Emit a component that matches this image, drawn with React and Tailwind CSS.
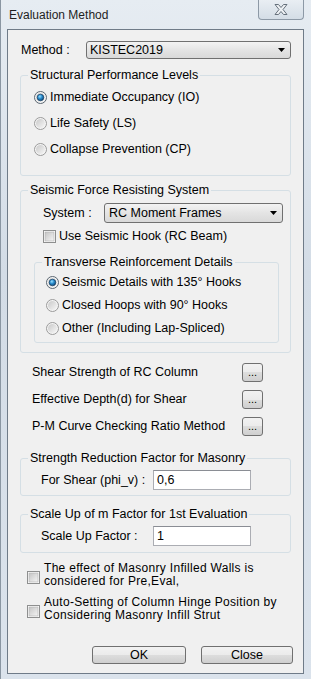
import { useState } from "react";

/* ================= UI HELPERS ================= */

const FONT = "font-['Liberation_Sans',Arial,sans-serif]";

function Radio({ checked }) {
  return (
    <svg width="13" height="13" viewBox="0 0 13 13" className="shrink-0">
      <defs>
        <linearGradient id="rOff" x1="0" y1="0" x2="1" y2="1">
          <stop offset="0%" stopColor="#c9c9c9" />
          <stop offset="100%" stopColor="#f7f7f7" />
        </linearGradient>
        <radialGradient id="rOn" cx="0.4" cy="0.35" r="0.7">
          <stop offset="0%" stopColor="#9be1ff" />
          <stop offset="45%" stopColor="#2b8fd0" />
          <stop offset="100%" stopColor="#0b3f6e" />
        </radialGradient>
      </defs>
      <circle cx="6.5" cy="6.5" r="6" fill="#f4f4f4" stroke={checked ? "#5b6670" : "#9a9a9a"} />
      <circle cx="6.5" cy="6.5" r="4.5" fill="url(#rOff)" />
      {checked && <circle cx="6.5" cy="6.5" r="3.3" fill="url(#rOn)" stroke="#173f63" strokeWidth="0.7" />}
    </svg>
  );
}

function Check() {
  return (
    <svg width="13" height="13" viewBox="0 0 13 13" className="shrink-0">
      <defs>
        <linearGradient id="cb" x1="0" y1="0" x2="1" y2="1">
          <stop offset="0%" stopColor="#c4c4c4" />
          <stop offset="100%" stopColor="#f5f5f5" />
        </linearGradient>
      </defs>
      <rect x="0.5" y="0.5" width="12" height="12" fill="#ffffff" stroke="#8e8f8f" />
      <rect x="2" y="2" width="9" height="9" fill="url(#cb)" stroke="#b0b0b0" strokeWidth="0.6" />
    </svg>
  );
}

function Arrow() {
  return (
    <svg width="7" height="4" viewBox="0 0 7 4" className="shrink-0">
      <polygon points="0,0 7,0 3.5,4" fill="#000" />
    </svg>
  );
}

function Group({ title, className, children }) {
  return (
    <div className={`relative shrink-0 rounded-[3px] border border-[#d5dfe5] ${className}`}>
      <span className="absolute top-[-8px] left-[7px] px-[2px] bg-[#f0f0f0] leading-[14px] whitespace-nowrap">
        {title}
      </span>
      {children}
    </div>
  );
}

function RadioRow({ checked, label }) {
  return (
    <div className="flex items-center h-[16px]">
      <Radio checked={checked} />
      <span className="ml-[3px] leading-[16px] whitespace-nowrap">{label}</span>
    </div>
  );
}

function DotsRow({ label }) {
  return (
    <div className="flex items-center h-[19px] pl-[12px]">
      <span className="w-[210px] whitespace-nowrap">{label}</span>
      <div className="flex items-end justify-center w-[21px] h-[19px] rounded-[3px] border border-[#707070] bg-[linear-gradient(#f2f2f2_0%,#ebebeb_50%,#dddddd_50%,#cfcfcf_100%)] pb-[3px] text-[11px] leading-none">
        ...
      </div>
    </div>
  );
}

function Field({ value }) {
  return (
    <div className="w-[98px] h-[20px] border border-[#abadb3] border-t-[#8a8d94] bg-white pl-[3px] leading-[18px]">
      {value}
    </div>
  );
}

function CheckNote({ className, lines }) {
  return (
    <div className={`flex items-center pl-[7px] shrink-0 ${className}`}>
      <div className="mt-[4px]">
        <Check />
      </div>
      <div className="ml-[4px] flex flex-col text-[12px] leading-[13px] tracking-[0.3px]">
        {lines.map((line) => (
          <span key={line} className="whitespace-nowrap">
            {line}
          </span>
        ))}
      </div>
    </div>
  );
}

/* ================= COMPONENT ================= */

export default function App() {
  const [method] = useState("KISTEC2019");

  return (
    <div className={`${FONT} w-[311px] h-[679px] overflow-hidden bg-[linear-gradient(#e6ecf2,#d3dce6_40%,#dbe3ec)] border-l border-[#8a96a2] text-[12px] text-black`}>
      {/* ===== TITLE BAR ===== */}
      <div className="relative h-[29px] flex items-center pl-[8px] pt-[1px]">
        <span className="leading-[14px] text-[#1e1e1e]">Evaluation Method</span>
        <div className="absolute top-0 left-[257px] w-[46px] h-[20px] flex items-center justify-center rounded-b-[4px] border border-t-0 border-[#8d99a6] bg-[linear-gradient(#e9eef3,#d4dde6)]">
          <svg width="14" height="11" viewBox="0 0 14 11">
            <polygon
              points="1,0.5 4.5,0.5 7,3.5 9.5,0.5 13,0.5 9,5.5 13,10.5 9.5,10.5 7,7.5 4.5,10.5 1,10.5 5,5.5"
              fill="#eef1f4"
              stroke="#66717c"
              strokeWidth="1"
              strokeLinejoin="round"
            />
          </svg>
        </div>
      </div>

      {/* ===== CLIENT ===== */}
      <div className="ml-[6px] w-[297px] h-[645px] border border-[#6f7b88] bg-[#f0f0f0] pl-[12px] flex flex-col text-[12.5px]">
        {/* METHOD */}
        <div className="mt-[11px] h-[18px] flex items-center shrink-0">
          <span className="w-[66px] pl-[1px] whitespace-nowrap">Method :</span>
          <div className="flex items-center justify-between w-[205px] h-[18px] rounded-[3px] border border-[#707070] bg-[linear-gradient(#f3f3f3,#e4e4e4_50%,#d9d9d9)] pl-[3px] pr-[5px]">
            <span>{method}</span>
            <Arrow />
          </div>
        </div>

        {/* PERFORMANCE LEVELS */}
        <Group title="Structural Performance Levels" className="mt-[16px] w-[271px] h-[101px]">
          <div className="flex flex-col gap-[10px] pt-[13px] pl-[13px]">
            <RadioRow checked label="Immediate Occupancy (IO)" />
            <RadioRow label="Life Safety (LS)" />
            <RadioRow label="Collapse Prevention (CP)" />
          </div>
        </Group>

        {/* SEISMIC SYSTEM */}
        <Group title="Seismic Force Resisting System" className="mt-[14px] w-[271px] h-[163px]">
          <div className="flex items-center mt-[12px] h-[20px] pl-[22px]">
            <span className="w-[61px] whitespace-nowrap">System :</span>
            <div className="flex items-center justify-between w-[179px] h-[20px] rounded-[3px] border border-[#707070] bg-[linear-gradient(#f3f3f3,#e4e4e4_50%,#d9d9d9)] pl-[4px] pr-[5px]">
              <span>RC Moment Frames</span>
              <Arrow />
            </div>
          </div>

          <div className="flex items-center mt-[6px] h-[14px] pl-[22px]">
            <Check />
            <span className="ml-[3px] whitespace-nowrap">Use Seismic Hook (RC Beam)</span>
          </div>

          <Group title="Transverse Reinforcement Details" className="mt-[19px] ml-[13px] w-[245px] h-[81px]">
            <div className="flex flex-col gap-[7px] pt-[11px] pl-[11px]">
              <RadioRow checked label="Seismic Details with 135° Hooks" />
              <RadioRow label="Closed Hoops with 90° Hooks" />
              <RadioRow label="Other (Including Lap-Spliced)" />
            </div>
          </Group>
        </Group>

        {/* OPTIONS */}
        <div className="mt-[10px] flex flex-col gap-[8px] shrink-0">
          <DotsRow label="Shear Strength of RC Column" />
          <DotsRow label="Effective Depth(d) for Shear" />
          <DotsRow label="P-M Curve Checking Ratio Method" />
        </div>

        {/* STRENGTH REDUCTION */}
        <Group title="Strength Reduction Factor for Masonry" className="mt-[22px] w-[271px] h-[38px]">
          <div className="flex items-center mt-[11px] pl-[20px]">
            <span className="w-[112px] whitespace-nowrap">For Shear (phi_v) :</span>
            <Field value="0,6" />
          </div>
        </Group>

        {/* SCALE UP */}
        <Group title="Scale Up of m Factor for 1st Evaluation" className="mt-[18px] w-[271px] h-[39px]">
          <div className="flex items-center mt-[11px] pl-[20px]">
            <span className="w-[112px] whitespace-nowrap">Scale Up Factor :</span>
            <Field value="1" />
          </div>
        </Group>

        {/* MASONRY CHECKS */}
        <CheckNote
          className="mt-[9px]"
          lines={["The effect of Masonry Infilled Walls is", "considered for Pre,Eval,"]}
        />
        <CheckNote
          className="mt-[8px]"
          lines={["Auto-Setting of Column Hinge Position by", "Considering Masonry Infill Strut"]}
        />

        {/* ===== ACTIONS ===== */}
        <div className="mt-[24px] flex gap-[15px] pl-[72px] shrink-0">
          <button className="w-[94px] h-[18px] rounded-[3px] border border-[#707070] bg-[linear-gradient(#f2f2f2_0%,#ebebeb_50%,#dddddd_50%,#cfcfcf_100%)] leading-[16px]">
            OK
          </button>
          <button className="w-[92px] h-[18px] rounded-[3px] border border-[#707070] bg-[linear-gradient(#f2f2f2_0%,#ebebeb_50%,#dddddd_50%,#cfcfcf_100%)] leading-[16px]">
            Close
          </button>
        </div>
      </div>
    </div>
  );
}
